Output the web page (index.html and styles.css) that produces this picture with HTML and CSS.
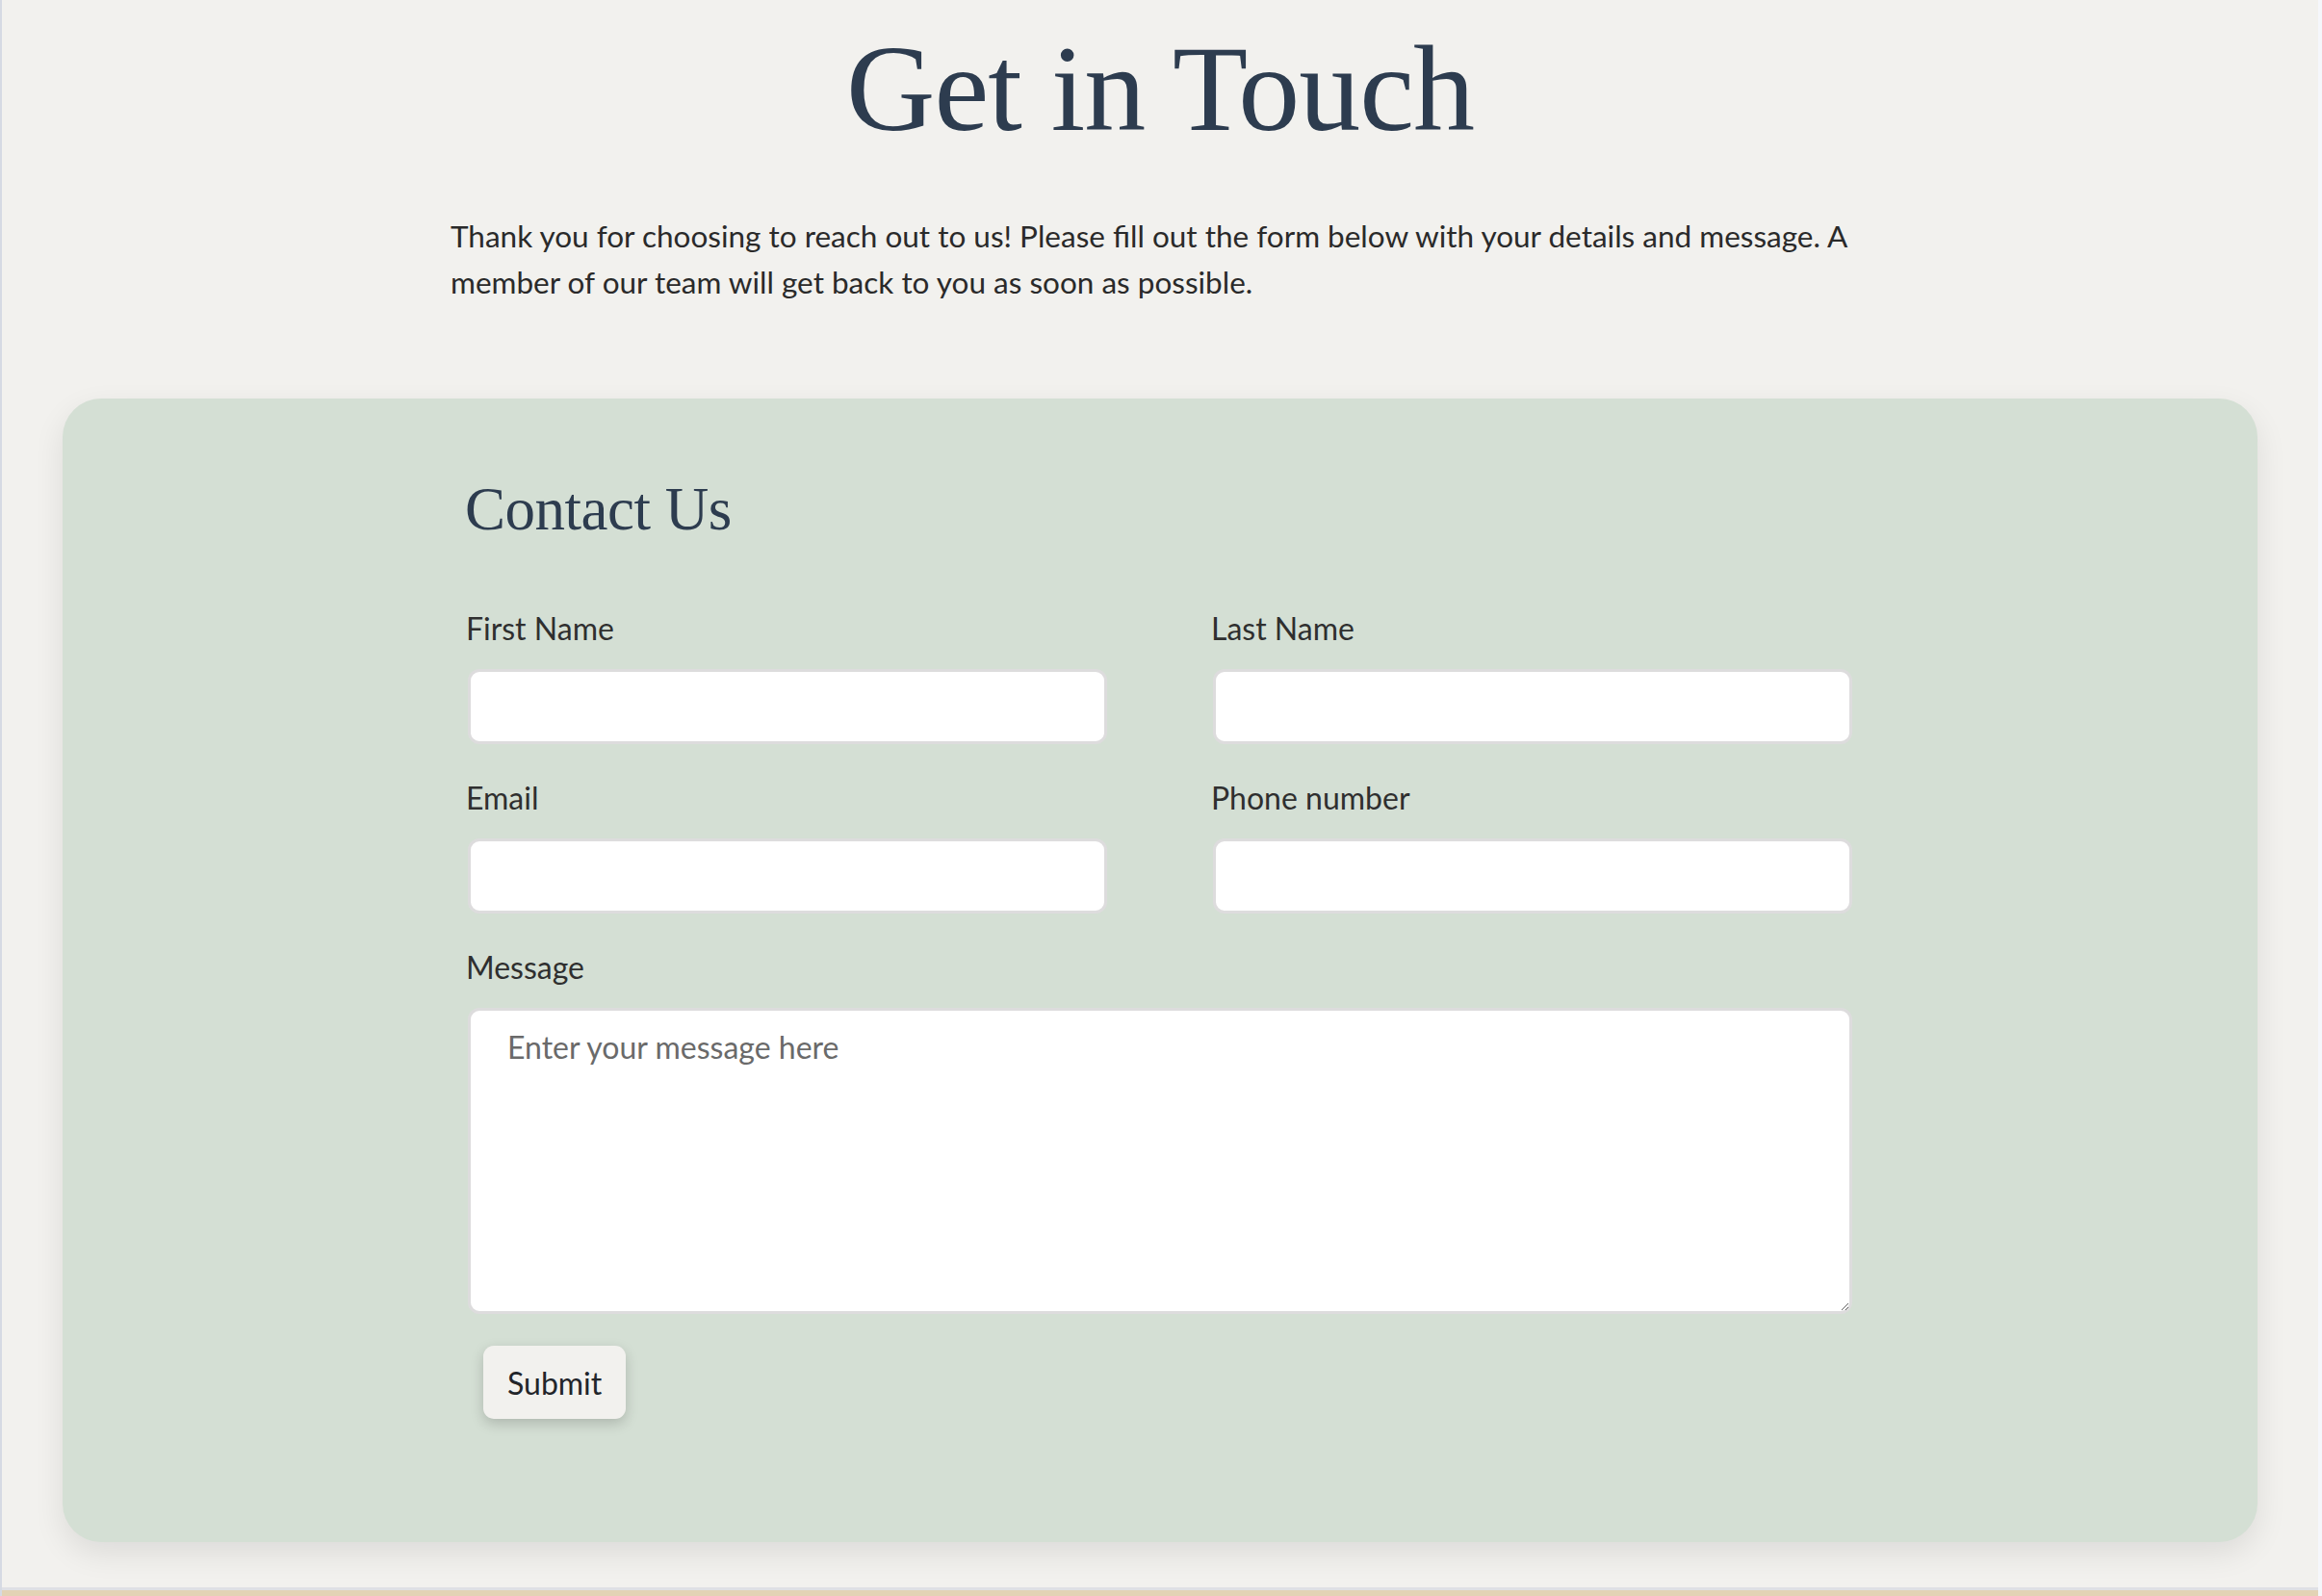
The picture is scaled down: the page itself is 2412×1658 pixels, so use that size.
FILE: index.html
```html
<!DOCTYPE html>
<html lang="en">
<head>
<meta charset="utf-8">
<title>Get in Touch</title>
<link rel="stylesheet" href="styles.css">
</head>
<body>
<div class="frame">
  <main class="page">
    <h1 class="title">Get in Touch</h1>
    <p class="intro">Thank you for choosing to reach out to us! Please fill out the form below with your details and message. A member of our team will get back to you as soon as possible.</p>
    <section class="card">
      <div class="card-inner">
        <h2 class="card-title">Contact Us</h2>
        <form class="form">
          <div class="fields">
            <div class="field">
              <label class="label" for="first">First Name</label>
              <input class="input" id="first" type="text">
            </div>
            <div class="field">
              <label class="label" for="last">Last Name</label>
              <input class="input" id="last" type="text">
            </div>
            <div class="field">
              <label class="label" for="email">Email</label>
              <input class="input" id="email" type="email">
            </div>
            <div class="field">
              <label class="label" for="phone">Phone number</label>
              <input class="input" id="phone" type="tel">
            </div>
            <div class="field field-wide">
              <label class="label" for="msg">Message</label>
              <textarea class="textarea" id="msg" placeholder="Enter your message here"></textarea>
            </div>
          </div>
          <button class="submit" type="button">Submit</button>
        </form>
      </div>
    </section>
  </main>
  <footer class="footer"></footer>
</div>
</body>
</html>
```

FILE: styles.css
```css
html, body {
  margin: 0;
  padding: 0;
}

body {
  background: #f2f1ee;
  font-family: "Lato", "Noto Sans", sans-serif;
  color: #2d2d2d;
  overflow: hidden;
}

.frame {
  border-left: 2px solid #d6dae3;
  border-right: 4px solid #f5f7fb;
  min-height: 1658px;
  box-sizing: border-box;
}

.page {
  padding: 15px 0 47px;
}

.title {
  margin: 0;
  text-align: center;
  font-family: "Liberation Serif", "DejaVu Serif", serif;
  font-weight: 400;
  font-size: 128px;
  letter-spacing: -1px;
  line-height: 154px;
  color: #2d3c4f;
}

.intro {
  max-width: 1474px;
  margin: 52px auto 0;
  font-size: 31.5px;
  line-height: 48px;
  color: #2a2a2a;
}

.card {
  margin: 97px 63px 0;
  background: #d4dfd4;
  border-radius: 40px;
  box-shadow: 0 12px 32px rgba(0, 0, 0, 0.09);
  padding: 77px 0 128px;
}

.card-inner {
  width: 1438px;
  margin: 0 auto;
}

.card-title {
  margin: 0 0 61px -3px;
  font-family: "Liberation Serif", "DejaVu Serif", serif;
  font-weight: 400;
  font-size: 63px;
  line-height: 77px;
  color: #2d3c4f;
  letter-spacing: -0.5px;
}

.form {
  margin: 0;
}

.fields {
  display: grid;
  grid-template-columns: 1fr 1fr;
  column-gap: 110px;
  row-gap: 32px;
}

.field-wide {
  grid-column: 1 / -1;
}

.label {
  display: block;
  font-size: 32px;
  line-height: 48px;
  margin-bottom: 18px;
  margin-left: -2px;
  color: #2f2f2f;
}

.input,
.textarea {
  display: block;
  width: 100%;
  box-sizing: border-box;
  background: #ffffff;
  border: 3px solid #dddcdd;
  border-radius: 12px;
  font-family: "Lato", "Noto Sans", sans-serif;
  font-size: 32px;
  color: #333;
  outline: none;
}

.input {
  height: 78px;
  padding: 0 20px;
}

.textarea {
  height: 318px;
  padding: 18px 38px;
  resize: vertical;
  line-height: normal;
}

.textarea::placeholder {
  color: #6a6a6a;
  opacity: 1;
}

.submit {
  display: block;
  margin: 33px 0 0 16px;
  height: 76px;
  padding: 0 25px;
  background: #f2f1ee;
  border: none;
  border-radius: 11px;
  box-shadow: 0 5px 14px rgba(0, 0, 0, 0.18);
  font-family: "Lato", "Noto Sans", sans-serif;
  font-size: 32px;
  color: #22252a;
  cursor: pointer;
}

.footer {
  border-top: 3px solid #dfe0e4;
  background: #e3d3b5;
  height: 40px;
}
```
